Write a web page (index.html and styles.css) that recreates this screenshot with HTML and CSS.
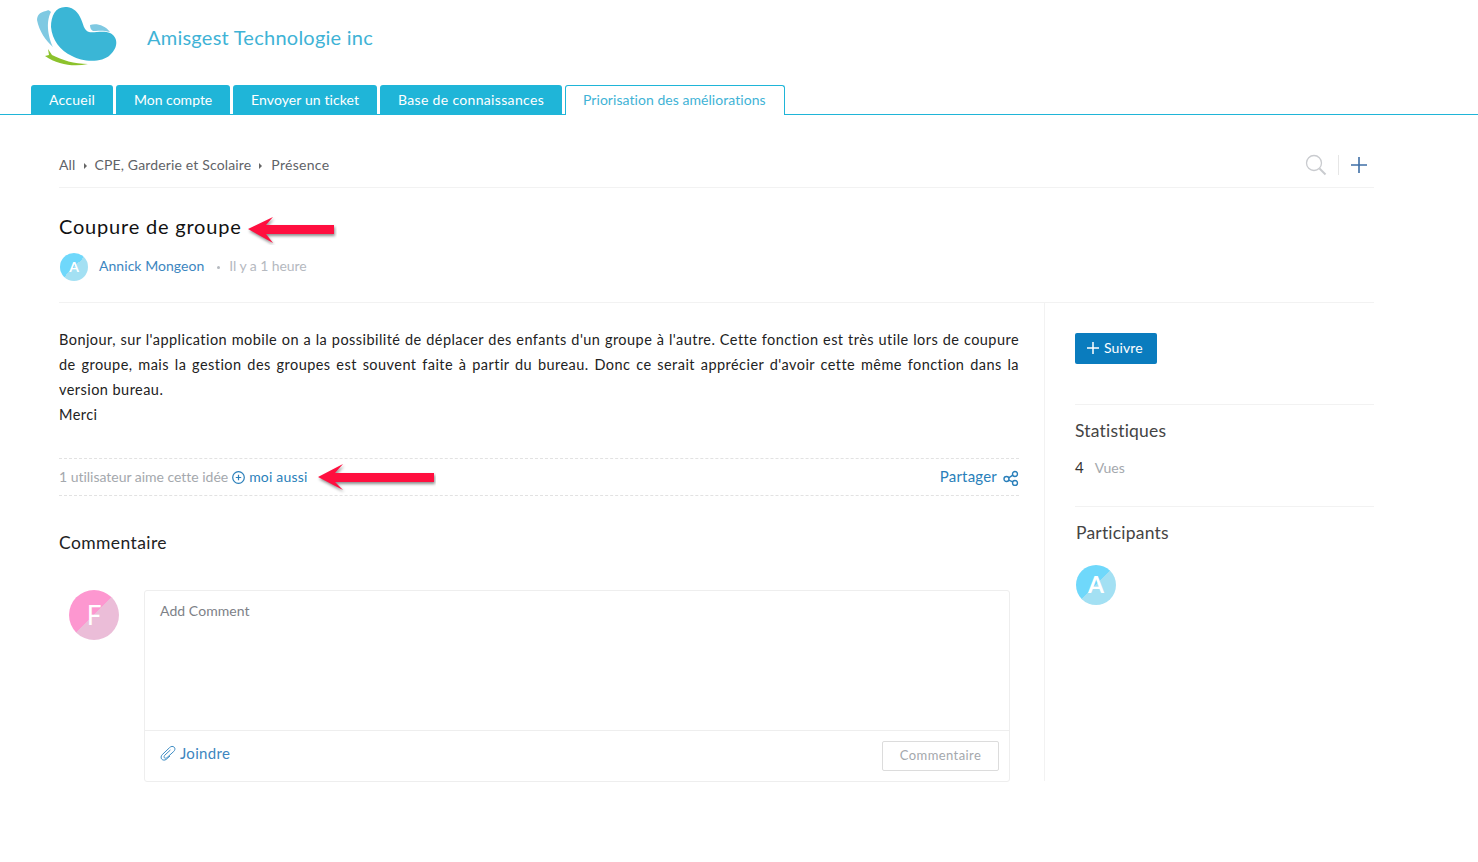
FILE: index.html
```html
<!DOCTYPE html>
<html lang="fr">
<head>
    <meta charset="UTF-8">
    <meta name="viewport" content="width=device-width, initial-scale=1.0">
    <title>Coupure de groupe</title>
    <link rel="stylesheet" href="styles.css">
</head>
<body>
    <header class="site-header">
        <div class="brand">
            <svg class="logo" width="84" height="62" viewBox="0 0 84 62">
                <path d="M10 6 C4 7 1 10 1 15 C3 26 10 36 17 42 C13 34 9 18 15 7 C13 5 12 5 10 6 Z" fill="#7fc9e2"/>
                <path d="M31 2 C20 1 15 10 15 22 C16 34 24 46 36 51 C46 57 66 58 74 50 C83 42 82 32 74 28 C68 25 58 28 53 27 C48 26 47 18 45 14 C42 7 38 3 31 2 Z" fill="#3ab6d6"/>
                <path d="M54 20 C60 18 69 20 74 27 C68 25 60 26 57 26 C55 25 54 23 54 20 Z" fill="#7fc9e2"/>
                <path d="M12 44 L16 50 C26 55 38 59 52 59 C38 62 22 60 9 51 L13 50 Z" fill="#8cc22c"/>
            </svg>
            <span class="brand-name">Amisgest Technologie inc</span>
        </div>
        <nav class="tabs">
            <a class="tab tab-home">Accueil</a>
            <a class="tab tab-account">Mon compte</a>
            <a class="tab tab-ticket">Envoyer un ticket</a>
            <a class="tab tab-base">Base de connaissances</a>
            <a class="tab active">Priorisation des améliorations</a>
        </nav>
    </header>

    <main class="container">
        <div class="breadcrumb-row">
            <div class="breadcrumb">
                <span>All</span><i class="caret"></i>
                <span>CPE, Garderie et Scolaire</span><i class="caret caret-last"></i>
                <span class="crumb-last">Présence</span>
            </div>
            <div class="crumb-tools">
                <svg width="22" height="22" viewBox="0 0 22 22" fill="none" stroke="#c9cbcf" stroke-width="1.3">
                    <circle cx="9" cy="9" r="7.5"/>
                    <path d="M14.5 14.5 L20.5 20.5" stroke-width="2"/>
                </svg>
                <span class="tool-sep"></span>
                <svg width="18" height="18" viewBox="0 0 18 18" stroke="#3f6fa6" stroke-width="1.6">
                    <path d="M9 1 V17 M1 9 H17"/>
                </svg>
            </div>
        </div>

        <div class="idea-head">
            <h1 class="idea-title">Coupure de groupe</h1>
            <div class="idea-meta">
                <span class="avatar avatar-small">A</span>
                <a class="author">Annick Mongeon</a>
                <i class="dot"></i>
                <span class="when">Il y a 1 heure</span>
            </div>
        </div>

        <div class="columns">
            <section class="main-col">
                <p class="idea-text">Bonjour, sur l'application mobile on a la possibilité de déplacer des enfants d'un groupe à l'autre. Cette fonction est très utile lors de coupure de groupe, mais la gestion des groupes est souvent faite à partir du bureau. Donc ce serait apprécier d'avoir cette même fonction dans la version bureau.</p>
                <p class="idea-text">Merci</p>

                <div class="vote-bar">
                    <div class="votes">
                        1 utilisateur aime cette idée
                        <svg class="plus-circle" width="13" height="13" viewBox="0 0 13 13" fill="none" stroke="#2a7fba" stroke-width="1.2">
                            <circle cx="6.5" cy="6.5" r="5.8"/>
                            <path d="M6.5 3.8 V9.2 M3.8 6.5 H9.2"/>
                        </svg>
                        <a class="link">moi aussi</a>
                    </div>
                    <a class="share link">Partager
                        <svg class="share-icon" width="16" height="16" viewBox="0 0 16 16" fill="none" stroke="#2a7fba" stroke-width="1.4">
                            <circle cx="3.5" cy="9" r="2.5"/>
                            <circle cx="12" cy="4" r="2.5"/>
                            <circle cx="12" cy="13" r="2.5"/>
                            <path d="M5.7 7.8 L9.8 5.2 M5.7 10.2 L9.8 11.9"/>
                        </svg>
                    </a>
                </div>

                <h2 class="comment-title">Commentaire</h2>

                <div class="comment-row">
                    <span class="avatar avatar-pink">F</span>
                    <div class="comment-box">
                        <div class="comment-input">Add Comment</div>
                        <div class="comment-foot">
                            <a class="attach">
                                <svg width="16" height="16" viewBox="0 0 16 16" fill="none" stroke="#3d8cc4" stroke-width="1">
                                    <path d="M10 11 L6 14.5 C4.8 15.4 2.8 15.3 1.8 14.2 C0.7 13 0.9 11 2.2 9.7 L9.6 2.6 C11 1.2 13 1 14.2 2.2 C15.4 3.4 15 5.2 13.8 6.4 L7 12.6 C6.2 13.3 5 13.4 4.4 12.8 C3.8 12 4 11 4.8 10.2 L10.4 5"/>
                                </svg>
                                Joindre
                            </a>
                            <button class="comment-btn">Commentaire</button>
                        </div>
                    </div>
                </div>
            </section>

            <aside class="side-col">
                <button class="follow-btn">
                    <svg width="12" height="12" viewBox="0 0 12 12" stroke="#fff" stroke-width="1.5">
                        <path d="M6 0 V12 M0 6 H12"/>
                    </svg>
                    Suivre
                </button>
                <div class="side-block side-stats">
                    <h3 class="side-title">Statistiques</h3>
                    <div class="stats"><b>4</b><span>Vues</span></div>
                </div>
                <div class="side-block side-people">
                    <h3 class="side-title">Participants</h3>
                    <span class="avatar avatar-large">A</span>
                </div>
            </aside>
        </div>
    </main>

    <svg class="arrow arrow-title" width="90" height="30" viewBox="0 0 90 30">
        <path d="M1 14 L26 2 L19 10 L87 10 L87 19 L19 19 L26 28 Z"/>
    </svg>
    <svg class="arrow arrow-vote" width="120" height="32" viewBox="0 0 120 32">
        <path d="M2 15 L27 2 L19 11 L118 11 L118 20 L19 20 L27 28 Z"/>
    </svg>
</body>
</html>
```
FILE: styles.css
```css
* {
    margin: 0;
    padding: 0;
    box-sizing: border-box;
}

body {
    font-family: 'Lato', 'Open Sans', sans-serif;
    background: #fff;
    color: #333;
    height: 862px;
    overflow: hidden;
    position: relative;
}

.site-header {
    border-bottom: 1px solid #1fb5d8;
    height: 115px;
    padding-left: 31px;
}

.brand {
    height: 85px;
    display: flex;
    align-items: flex-start;
}

.logo {
    margin: 5px 0 0 5px;
}

.brand-name {
    margin: 24px 0 0 27px;
    font-size: 20px;
    line-height: 26px;
    color: #3fb3d6;
    letter-spacing: 0.25px;
}

.tabs {
    display: flex;
    gap: 3px;
}

.tab {
    height: 29px;
    padding: 0 0 0 18px;
    background: #1fb5d8;
    color: #fff;
    font-size: 14px;
    line-height: 30px;
    border-radius: 3px 3px 0 0;
    white-space: nowrap;
}

.tab-home {
    width: 82px;
    letter-spacing: 0.25px;
}

.tab-account {
    width: 114px;
}

.tab-ticket {
    width: 144px;
    letter-spacing: 0.1px;
}

.tab-base {
    width: 182px;
    letter-spacing: 0.33px;
}

.tab.active {
    width: 220px;
    height: 30px;
    background: #fff;
    color: #3fb3d6;
    border: 1px solid #1fb5d8;
    border-bottom: none;
    line-height: 28px;
    padding: 0 0 0 17px;
    letter-spacing: 0.05px;
}

.container {
    width: 1315px;
    margin-left: 59px;
}

.breadcrumb-row {
    height: 73px;
    padding-top: 35px;
    display: flex;
    justify-content: space-between;
    border-bottom: 1px solid #f2f2f2;
}

.breadcrumb {
    display: flex;
    align-items: flex-start;
    font-size: 14px;
    line-height: 30px;
    color: #5f6368;
    height: 30px;
    letter-spacing: 0.15px;
}

.caret {
    width: 0;
    height: 0;
    margin: 13px 8px 0 8px;
    border-left: 3px solid #666;
    border-top: 3px solid transparent;
    border-bottom: 3px solid transparent;
}

.caret-last {
    margin-right: 9px;
}

.crumb-last {
    letter-spacing: 0.3px;
}

.crumb-tools {
    display: flex;
    align-items: center;
    height: 30px;
    padding-right: 6px;
}

.tool-sep {
    width: 1px;
    height: 20px;
    background: #e6e6e6;
    margin: 0 11px 0 11px;
}

.idea-head {
    height: 115px;
    border-bottom: 1px solid #f2f2f2;
    padding-top: 24px;
}

.idea-title {
    font-size: 20px;
    font-weight: 400;
    line-height: 28px;
    color: #111;
    letter-spacing: 0.8px;
}

.idea-meta {
    display: flex;
    align-items: flex-start;
    margin-top: 13px;
    padding-left: 1px;
    font-size: 14px;
    line-height: 26px;
}

.avatar {
    display: inline-block;
    border-radius: 50%;
    text-align: center;
    color: #fff;
    background: linear-gradient(135deg, #6fd8fb 50%, #a3e0f3 50%);
    flex: none;
}

.avatar-small {
    width: 28px;
    height: 28px;
    line-height: 28px;
    font-size: 14px;
    font-weight: 700;
}

.avatar-large {
    width: 40px;
    height: 40px;
    line-height: 38px;
    font-size: 23px;
    font-weight: 700;
}

.avatar-pink {
    width: 50px;
    height: 50px;
    line-height: 50px;
    font-size: 26px;
    background: linear-gradient(135deg, #fd97d0 50%, #ebbdd8 50%);
}

.author {
    margin-left: 11px;
    color: #3d86c0;
    letter-spacing: 0.05px;
}

.dot {
    width: 3px;
    height: 3px;
    border-radius: 50%;
    background: #b5b9bf;
    margin: 13px 9px 0 13px;
}

.when {
    color: #b5b9bf;
    letter-spacing: -0.08px;
}

.columns {
    display: flex;
}

.main-col {
    width: 986px;
    height: 478px;
    padding-right: 25px;
    border-right: 1px solid #f2f2f2;
}

.idea-text {
    font-size: 14.5px;
    line-height: 25px;
    color: #222;
    text-align: justify;
    letter-spacing: 0.45px;
}

.idea-text:first-child {
    margin-top: 24px;
}

.vote-bar {
    display: flex;
    justify-content: space-between;
    height: 38px;
    margin-top: 31px;
    border-top: 1px dashed #e2e2e2;
    border-bottom: 1px dashed #e2e2e2;
    font-size: 14px;
    line-height: 35px;
}

.votes {
    display: flex;
    align-items: center;
    height: 35px;
    color: #a4a8ad;
    letter-spacing: -0.02px;
}

.plus-circle {
    margin: 1px 4px 0 4px;
}

.link {
    color: #2a7fba;
    letter-spacing: 0.2px;
}

.share {
    display: flex;
    align-items: center;
    gap: 6px;
    height: 35px;
    font-size: 15px;
}

.share-icon {
    margin-top: 3px;
}

.comment-title {
    font-size: 17.5px;
    font-weight: 400;
    line-height: 24px;
    color: #222;
    letter-spacing: 0.4px;
    margin-top: 35px;
}

.comment-row {
    display: flex;
    margin-top: 35px;
    padding-left: 10px;
}

.comment-box {
    width: 866px;
    height: 192px;
    margin-left: 25px;
    border: 1px solid #eeeeee;
    border-radius: 3px;
}

.comment-input {
    height: 140px;
    padding: 11px 15px;
    font-size: 14px;
    line-height: 18px;
    color: #7d8187;
    border-bottom: 1px solid #eeeeee;
    letter-spacing: 0.07px;
}

.comment-foot {
    display: flex;
    justify-content: space-between;
    padding: 10px 10px 0 15px;
}

.attach {
    display: flex;
    align-items: center;
    gap: 4px;
    height: 24px;
    font-size: 15px;
    color: #3d86c0;
    letter-spacing: 0.3px;
}

.comment-btn {
    width: 117px;
    height: 30px;
    padding-bottom: 2px;
    background: #fff;
    border: 1px solid #dcdcdc;
    border-radius: 2px;
    font-family: inherit;
    font-size: 13px;
    color: #a4a8ad;
    letter-spacing: 0.4px;
}

.side-col {
    padding: 30px 0 0 30px;
    width: 329px;
}

.follow-btn {
    display: flex;
    align-items: center;
    gap: 5px;
    width: 82px;
    height: 31px;
    padding: 0 0 2px 12px;
    background: #0a7cbe;
    border: none;
    border-radius: 2px;
    color: #fff;
    font-family: inherit;
    font-size: 14px;
    letter-spacing: 0.1px;
}

.side-block {
    border-top: 1px solid #f2f2f2;
}

.side-stats {
    margin-top: 40px;
    height: 102px;
}

.side-people {
    height: 100px;
}

.side-title {
    font-size: 17.5px;
    font-weight: 400;
    line-height: 24px;
    color: #444;
    margin-top: 14px;
    letter-spacing: 0.2px;
}

.side-people .side-title {
    margin-left: 1px;
}

.stats {
    display: flex;
    align-items: center;
    gap: 11px;
    margin-top: 15px;
    font-size: 14px;
    color: #a4a8ad;
}

.stats b {
    font-weight: 400;
    font-size: 15px;
    color: #333;
}

.side-people .avatar {
    display: block;
    margin: 20px 0 0 1px;
}

.arrow {
    position: absolute;
}

.arrow path {
    fill: #ff0f3f;
    filter: drop-shadow(1px 2px 1.5px rgba(0, 0, 0, 0.45));
}

.arrow-title {
    left: 247px;
    top: 215px;
}

.arrow-vote {
    left: 316px;
    top: 462px;
}
```
